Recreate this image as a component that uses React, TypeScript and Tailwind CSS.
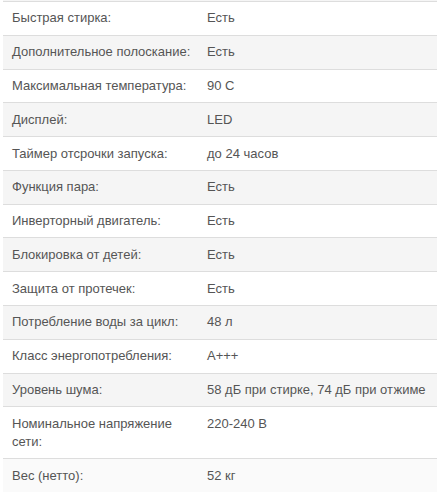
import React from "react";

const rows: [string, string][] = [
  ["Быстрая стирка:", "Есть"],
  ["Дополнительное полоскание:", "Есть"],
  ["Максимальная температура:", "90 С"],
  ["Дисплей:", "LED"],
  ["Таймер отсрочки запуска:", "до 24 часов"],
  ["Функция пара:", "Есть"],
  ["Инверторный двигатель:", "Есть"],
  ["Блокировка от детей:", "Есть"],
  ["Защита от протечек:", "Есть"],
  ["Потребление воды за цикл:", "48 л"],
  ["Класс энергопотребления:", "A+++"],
  ["Уровень шума:", "58 дБ при стирке, 74 дБ при отжиме"],
  ["Номинальное напряжение сети:", "220-240 В"],
  ["Вес (нетто):", "52 кг"],
];

export default function App() {
  return (
    <div
      className="w-[437px] h-[500px] bg-white overflow-hidden text-[13px] leading-[18px] text-[#555]"
      style={{ fontFamily: '"Liberation Sans", Arial, sans-serif' }}
    >
      <div className="ml-[3px] h-[1px] bg-[#f5f5f5]" />
      <div className="ml-[3px] flex flex-col">
        {rows.map(([k, v], i) => (
          <div
            key={i}
            className={
              "flex border-t border-[#dddddd] " +
              (i === rows.length - 1
                ? "bg-[#fafafa]"
                : i % 2 === 1
                ? "bg-[#f5f5f5]"
                : "bg-white")
            }
          >
            <div className="w-[195px] shrink-0 pl-[9px] pr-[2px] py-[7.4px]">{k}</div>
            <div className="flex-1 pl-[9px] pr-[4px] py-[7.4px] whitespace-nowrap">{v}</div>
          </div>
        ))}
      </div>
    </div>
  );
}
